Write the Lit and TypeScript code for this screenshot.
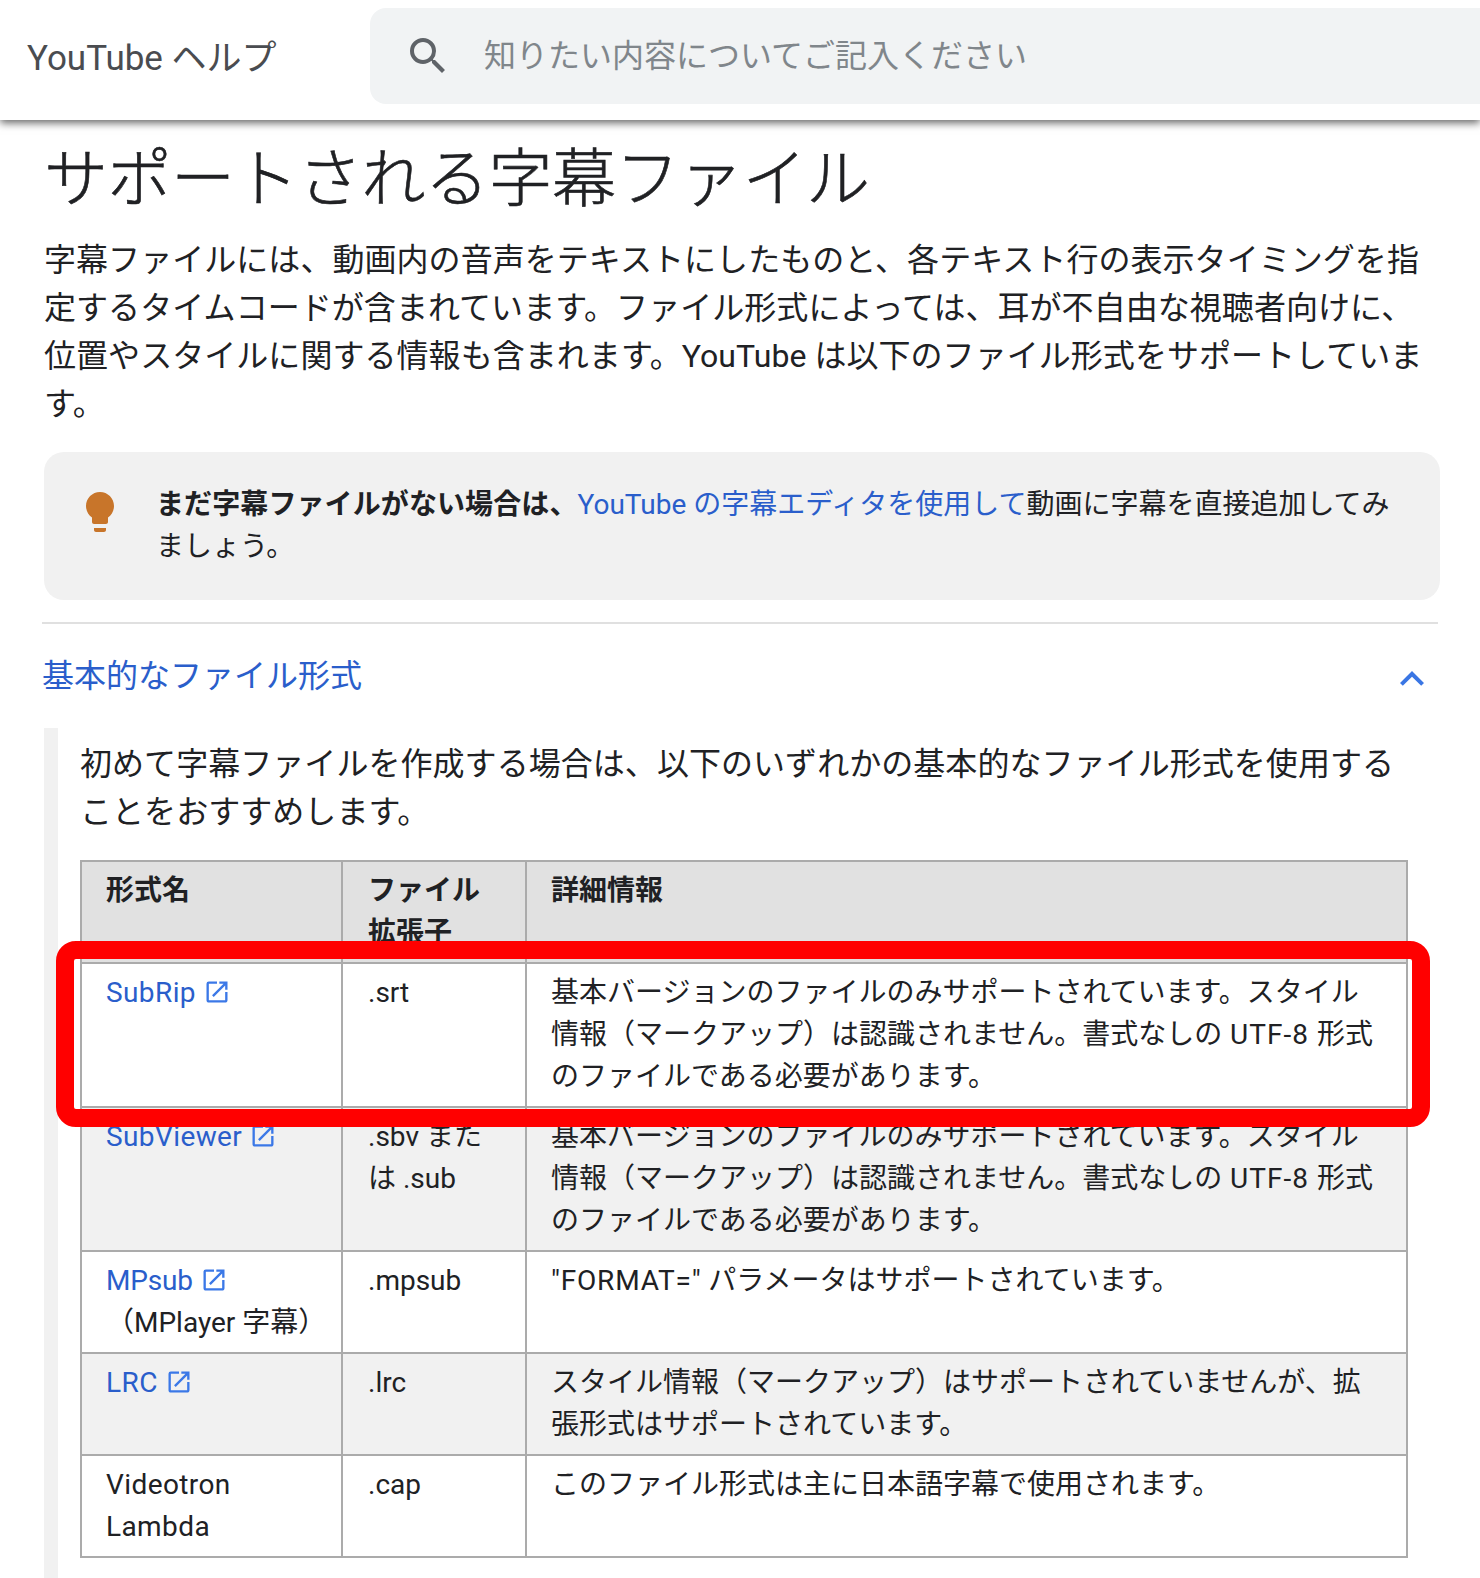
import { LitElement, html, css, svg } from "lit";
import { customElement } from "lit/decorators.js";

const EXT = svg`<path d="M19 19H5V5h7V3H5a2 2 0 0 0-2 2v14c0 1.1.9 2 2 2h14c1.1 0 2-.9 2-2v-7h-2v7zM14 3v2h3.59l-9.83 9.83 1.41 1.41L19 6.41V10h2V3h-7z"/>`;
const STYLE_NOTE = html`基本バージョンのファイルのみサポートされています。スタイル情報（マークアップ）は認識されません。書式なしの<span class="wide"> UTF-8 </span>形式のファイルである必要があります。`;

@customElement("app-root")
export class AppRoot extends LitElement {
  static styles = css`
    :host {
      display: block;
      position: relative;
      height: 1578px;
      overflow: hidden;
      background: #fff;
      color: #202124;
      font-family: Roboto, "Noto Sans CJK JP", sans-serif;
    }
    header {
      height: 120px;
      box-sizing: border-box;
      display: flex;
      align-items: center;
      background: #fff;
      box-shadow: 0 3px 8px rgba(0, 0, 0, 0.6);
      position: relative;
      padding-left: 27px;
    }
    .product {
      width: 343px;
      flex: none;
      font-size: 35px;
      font-weight: 400;
      color: #4a4c50;
      white-space: nowrap;
      margin-top: -11px;
    }
    .search {
      flex: 1;
      height: 96px;
      margin-top: -8px;
      background: #f1f3f4;
      border-radius: 16px 0 0 16px;
      display: flex;
      align-items: center;
      padding-left: 34px;
      color: #80868b;
      font-size: 32px;
      gap: 32px;
    }
    .search svg { width: 48px; height: 48px; fill: #5f6368; flex: none; }
    .search span { margin-bottom: 6px; }
    main {
      padding: 22px 44px 0;
    }
    h1 {
      margin: 0 0 18px;
      font-size: 64px;
      line-height: 76px;
      font-weight: 300;
      -webkit-text-stroke: 0.6px #202124;
      letter-spacing: -0.5px;
    }
    p { margin: 0; font-size: 32px; line-height: 48px; letter-spacing: 0.05px; }
    .tip {
      margin: 24px -4px 0 0;
      background: #f1f1f1;
      border-radius: 20px;
      padding: 32px;
      display: flex;
      gap: 32px;
      font-size: 28px;
      line-height: 42px;
    }
    .tip svg { width: 48px; height: 48px; fill: #c8752a; flex: none; margin-top: 4px; }
    .tip b { font-weight: 700; letter-spacing: 0.1px; }
    a { color: #2a5ecb; text-decoration: none; }
    .rule {
      height: 2px;
      background: #e0e0e0;
      margin: 22px -2px 0;
    }
    .acc {
      display: flex;
      justify-content: space-between;
      align-items: center;
      margin: 28px 0 0 -2px;
      height: 48px;
      font-size: 32px;
      line-height: 48px;
      color: #2a5ecb;
    }
    .acc svg { width: 48px; height: 48px; fill: #3a76e4; margin-top: 6px; }
    .body {
      margin-top: 28px;
      border-left: 14px solid #f1f1f1;
      padding: 12px 28px 40px 22px;
    }
    table {
      margin-top: 24px;
      width: 100%;
      table-layout: fixed;
      border-collapse: collapse;
      font-size: 28px;
      line-height: 42px;
    }
    col.c1 { width: 261px; }
    col.c2 { width: 184px; }
    th, td {
      border: 2px solid #ababab;
      padding: 8px 24px;
      vertical-align: top;
      text-align: left;
    }
    th:nth-child(2), td:nth-child(2) { padding-left: 25px; }
    th { background: #e1e1e1; font-weight: 700; }
    tbody tr:nth-child(even) td { background: #f1f1f1; }
    .ext { width: 28px; height: 28px; fill: #3b78e7; margin-left: 7px; vertical-align: -4px; }
    .wide { letter-spacing: 1px; }
    .loose { letter-spacing: 0.4px; }
    .tight { letter-spacing: -0.2px; }
    .format { letter-spacing: 0.8px; }
    .mark {
      position: absolute;
      left: 56px;
      top: 941px;
      width: 1374px;
      height: 186px;
      box-sizing: border-box;
      border: 18px solid #ff0000;
      border-radius: 20px;
    }
  `;

  private link(name: string, cls = "loose") {
    return html`<a href="#"><span class=${cls}>${name}</span><svg class="ext" viewBox="0 0 24 24">${EXT}</svg></a>`;
  }

  render() {
    const rows = [
      [this.link("SubRip"), ".srt", STYLE_NOTE],
      [this.link("SubViewer"), ".sbv または .sub", STYLE_NOTE],
      [html`${this.link("MPsub", "tight")}<br />（MPlayer 字幕）`, ".mpsub", html`<span class="format">"FORMAT="</span> パラメータはサポートされています。`],
      [this.link("LRC"), ".lrc", "スタイル情報（マークアップ）はサポートされていませんが、拡張形式はサポートされています。"],
      [html`<span class="loose">Videotron Lambda</span>`, ".cap", "このファイル形式は主に日本語字幕で使用されます。"],
    ];
    return html`
      <div lang="ja">
        <header>
          <div class="product">YouTube ヘルプ</div>
          <div class="search">
            <svg viewBox="0 0 24 24"><path d="M15.5 14h-.79l-.28-.27A6.471 6.471 0 0 0 16 9.5 6.5 6.5 0 1 0 9.5 16c1.61 0 3.09-.59 4.23-1.57l.27.28v.79l5 4.99L20.49 19l-4.99-5zm-6 0C7.01 14 5 11.99 5 9.5S7.01 5 9.5 5 14 7.01 14 9.5 11.99 14 9.5 14z"/></svg>
            <span>知りたい内容についてご記入ください</span>
          </div>
        </header>
        <main>
          <h1>サポートされる字幕ファイル</h1>
          <p>字幕ファイルには、動画内の音声をテキストにしたものと、各テキスト行の表示タイミングを指定するタイムコードが含まれています。ファイル形式によっては、耳が不自由な視聴者向けに、位置やスタイルに関する情報も含まれます。YouTube は以下のファイル形式をサポートしています。</p>
          <div class="tip">
            <svg viewBox="0 0 24 24"><path d="M9 21c0 .55.45 1 1 1h4c.55 0 1-.45 1-1v-1H9v1zm3-19C8.14 2 5 5.14 5 9c0 2.38 1.19 4.47 3 5.74V17c0 .55.45 1 1 1h6c.55 0 1-.45 1-1v-2.26c1.81-1.27 3-3.36 3-5.74 0-3.86-3.14-7-7-7z"/></svg>
            <div><b>まだ字幕ファイルがない場合は、</b><a href="#">YouTube の字幕エディタを使用して</a>動画に字幕を直接追加してみましょう。</div>
          </div>
          <div class="rule"></div>
          <div class="acc">
            <span>基本的なファイル形式</span>
            <svg viewBox="0 0 24 24"><path d="M12 8l-6 6 1.41 1.41L12 10.83l4.59 4.58L18 14z"/></svg>
          </div>
          <div class="body">
            <p>初めて字幕ファイルを作成する場合は、以下のいずれかの基本的なファイル形式を使用することをおすすめします。</p>
            <table>
              <colgroup><col class="c1" /><col class="c2" /><col /></colgroup>
              <thead><tr><th>形式名</th><th>ファイル拡張子</th><th>詳細情報</th></tr></thead>
              <tbody>
                ${rows.map((r) => html`<tr><td>${r[0]}</td><td>${r[1]}</td><td>${r[2]}</td></tr>`)}
              </tbody>
            </table>
          </div>
        </main>
        <div class="mark"></div>
      </div>
    `;
  }
}
